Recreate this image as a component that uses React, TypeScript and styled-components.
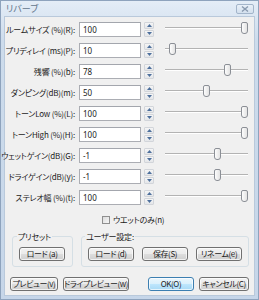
import React from 'react';
import styled, { createGlobalStyle } from 'styled-components';

type Param = {
  label: string;
  value: string;
  pos: number;
};

const params: Param[] = [
  { label: 'ルームサイズ (%)(R):', value: '100', pos: 1 },
  { label: 'プリディレイ (ms)(P):', value: '10', pos: 0.05 },
  { label: '残響 (%)(b):', value: '78', pos: 0.78 },
  { label: 'ダンピング(dB)(m):', value: '50', pos: 0.5 },
  { label: 'トーンLow (%)(L):', value: '100', pos: 1 },
  { label: 'トーンHigh (%)(H):', value: '100', pos: 1 },
  { label: 'ウェットゲイン(dB)(G):', value: '-1', pos: 0.64 },
  { label: 'ドライゲイン(dB)(y):', value: '-1', pos: 0.64 },
  { label: 'ステレオ幅 (%)(t):', value: '100', pos: 1 },
];

const GlobalStyle = createGlobalStyle`
  html, body {
    margin: 0;
    padding: 0;
    width: 259px;
    height: 300px;
    overflow: hidden;
    background: #ffffff;
  }
  * {
    box-sizing: border-box;
  }
`;

const font = `"Noto Sans CJK JP", "Noto Sans", sans-serif`;

const Window = styled.div`
  width: 259px;
  height: 300px;
  display: flex;
  flex-direction: column;
  background: linear-gradient(#e4edf7, #cddcec 40px, #c6d6e9);
  border: 1px solid #8ea3bd;
  padding: 0 3px 3px 3px;
  font-family: ${font};
  font-feature-settings: 'palt';
  color: #1b1b1b;
`;

const TitleBar = styled.div`
  height: 15px;
  display: flex;
  align-items: center;
  justify-content: space-between;
  padding: 0 1px 0 2px;
`;

const Title = styled.span`
  font-size: 9px;
  line-height: 11px;
  color: #63768c;
`;

const CloseButton = styled.div`
  width: 18px;
  height: 10px;
  margin-top: 1px;
  border: 1px solid #a3b5ca;
  border-radius: 2px;
  background: linear-gradient(#e9f0f8, #d3e0ee);
  display: flex;
  align-items: center;
  justify-content: center;
`;

const Client = styled.div`
  flex: 1;
  background: #f0f0f0;
  border: 1px solid #b9c9db;
  padding: 5px 5px 0 0;
  display: flex;
  flex-direction: column;
`;

const Rows = styled.div`
  display: flex;
  flex-direction: column;
  gap: 6px;
`;

const Row = styled.div`
  display: flex;
  align-items: center;
  height: 15px;
`;

const Label = styled.label`
  width: 70px;
  display: flex;
  justify-content: flex-end;
  font-size: 8px;
  line-height: 15px;
  white-space: nowrap;
  letter-spacing: -0.2px;
`;

const ValueBox = styled.div`
  width: 62px;
  height: 15px;
  margin-left: 4px;
  background: #ffffff;
  border: 1px solid #abadb3;
  border-top-color: #a3a6ad;
  font-size: 8px;
  line-height: 13px;
  padding-left: 3px;
  font-family: "Noto Sans", sans-serif;
`;

const Spin = styled.div`
  width: 10px;
  height: 15px;
  margin-left: 3px;
  display: flex;
  flex-direction: column;
  gap: 1px;
`;

const SpinHalf = styled.div`
  flex: 1;
  border: 1px solid #d2d5da;
  border-radius: 1px;
  background: linear-gradient(#f5f5f5, #e4e6e9);
  display: flex;
  align-items: center;
  justify-content: center;
`;

const Slider = styled.div`
  position: relative;
  width: 83px;
  height: 15px;
  margin-left: 11px;
`;

const Track = styled.div`
  position: absolute;
  left: 0;
  right: 0;
  top: 5px;
  height: 2px;
  border-top: 1px solid #b3b3b3;
  border-bottom: 1px solid #ffffff;
  background: #e4e4e4;
`;

const Thumb = styled.div`
  position: absolute;
  top: 0;
  width: 7px;
  height: 12px;
  border: 1px solid #8b8f96;
  border-radius: 2px 2px 3px 3px;
  background: linear-gradient(90deg, #fdfdfd, #e3e3e3);
`;

const CheckRow = styled.div`
  display: flex;
  align-items: center;
  height: 11px;
  margin-top: 9px;
  padding-left: 97px;
  gap: 3px;
  font-size: 8px;
  letter-spacing: -0.2px;
`;

const CheckBox = styled.div`
  width: 8px;
  height: 8px;
  border: 1px solid #8f8f8f;
  background: linear-gradient(135deg, #dcdcdc, #f6f6f6);
`;

const Groups = styled.div`
  display: flex;
  margin-top: 6px;
  padding-left: 7px;
  gap: 8px;
`;

const Group = styled.fieldset<{ $width: number }>`
  width: ${p => p.$width}px;
  margin: 0;
  padding: 5px 6px 5px 6px;
  min-width: 0;
  border: 1px solid #d5dfe5;
  border-radius: 3px;
  display: flex;
  gap: 8px;
`;

const Legend = styled.legend<{ $indent: number }>`
  font-size: 8px;
  line-height: 11px;
  padding: 0 1px;
  margin-left: ${p => p.$indent}px;
  letter-spacing: -0.2px;
`;

const Button = styled.div<{ $width: number; $primary?: boolean }>`
  width: ${p => p.$width}px;
  height: 14px;
  border: 1px solid ${p => (p.$primary ? '#3c7fb1' : '#707070')};
  border-radius: 3px;
  background: ${p =>
    p.$primary
      ? 'linear-gradient(#eaf6fd 0%, #d9f0fc 50%, #bee6fd 51%, #a7d9f5 100%)'
      : 'linear-gradient(#f2f2f2 0%, #ebebeb 50%, #dddddd 51%, #cfcfcf 100%)'};
  box-shadow: inset 0 0 0 1px rgba(255, 255, 255, 0.7);
  font-size: 8px;
  line-height: 12px;
  letter-spacing: -0.4px;
  text-align: center;
  white-space: nowrap;
  display: flex;
  justify-content: center;
`;

const Footer = styled.div`
  display: flex;
  align-items: center;
  margin-top: 10px;
  padding-left: 5px;
`;

const FooterGroup = styled.div<{ $push?: boolean }>`
  display: flex;
  gap: 5px;
  margin-left: ${p => (p.$push ? 'auto' : '0')};
`;

const Arrow = ({ up }: { up: boolean }) => (
  <svg width="5" height="3" viewBox="0 0 5 3">
    <path d={up ? 'M2.5 0 L5 3 L0 3 Z' : 'M0 0 L5 0 L2.5 3 Z'} fill="#4d6f9c" />
  </svg>
);

const App = () => {
  return (
    <>
      <GlobalStyle />
      <Window>
        <TitleBar>
          <Title>リバーブ</Title>
          <CloseButton>
            <svg width="8" height="6" viewBox="0 0 8 6">
              <path d="M1 0.5 L7 5.5 M7 0.5 L1 5.5" stroke="#8a9bb0" strokeWidth="1.4" />
            </svg>
          </CloseButton>
        </TitleBar>
        <Client>
          <Rows>
            {params.map(p => (
              <Row key={p.label}>
                <Label>{p.label}</Label>
                <ValueBox>{p.value}</ValueBox>
                <Spin>
                  <SpinHalf>
                    <Arrow up />
                  </SpinHalf>
                  <SpinHalf>
                    <Arrow up={false} />
                  </SpinHalf>
                </Spin>
                <Slider>
                  <Track />
                  <Thumb style={{ left: `${p.pos * 76}px` }} />
                </Slider>
              </Row>
            ))}
          </Rows>
          <CheckRow>
            <CheckBox />
            <span>ウエットのみ(n)</span>
          </CheckRow>
          <Groups>
            <Group $width={61}>
              <Legend $indent={-2}>プリセット</Legend>
              <Button $width={46}>ロード (a)</Button>
            </Group>
            <Group $width={168}>
              <Legend $indent={-3}>ユーザー設定:</Legend>
              <Button $width={46}>ロード (d)</Button>
              <Button $width={46}>保存(S)</Button>
              <Button $width={46}>リネーム(e)</Button>
            </Group>
          </Groups>
          <Footer>
            <FooterGroup>
              <Button $width={48}>プレビュー(v)</Button>
              <Button $width={66}>ドライプレビュー(w)</Button>
            </FooterGroup>
            <FooterGroup $push>
              <Button $width={46} $primary>
                OK(O)
              </Button>
              <Button $width={50}>キャンセル(C)</Button>
            </FooterGroup>
          </Footer>
        </Client>
      </Window>
    </>
  );
};

export default App;
